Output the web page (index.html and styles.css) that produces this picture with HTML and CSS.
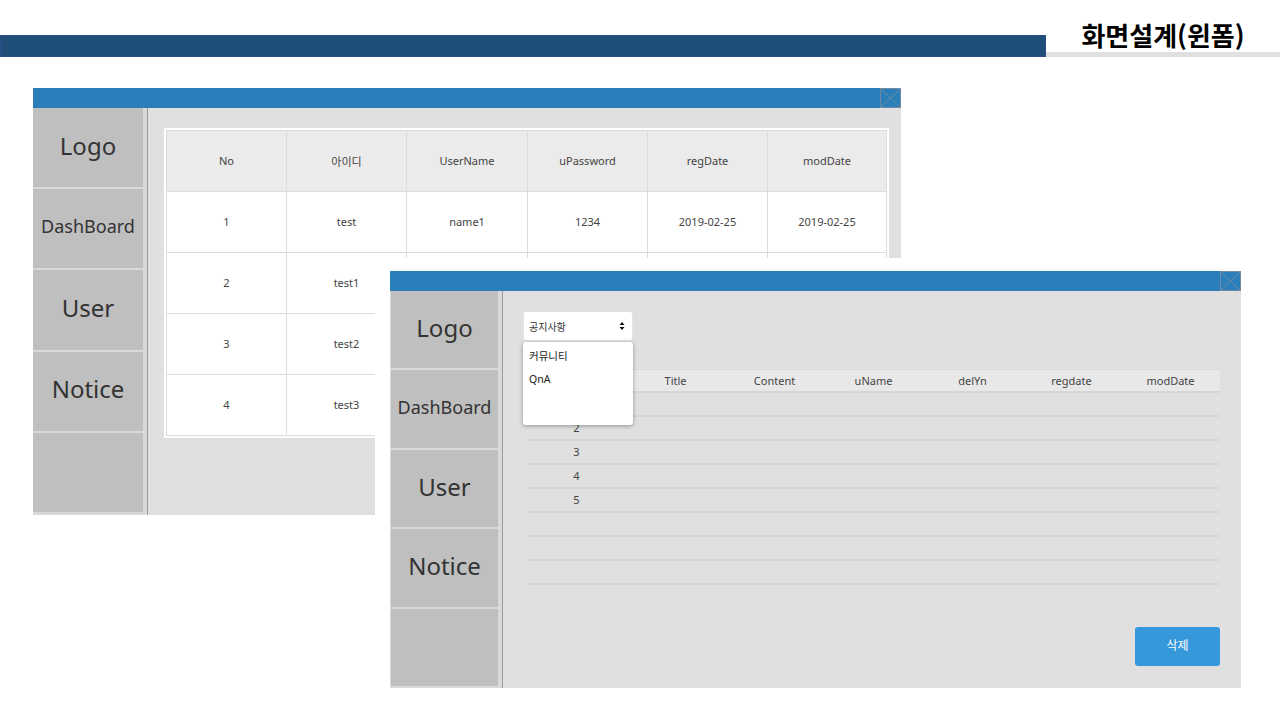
FILE: index.html
```html
<!DOCTYPE html>
<html lang="ko">
<head>
<meta charset="utf-8">
<title>화면설계(윈폼)</title>
<link rel="stylesheet" href="styles.css">
</head>
<body>
<header class="topbar">
  <div class="bluebar"></div>
  <div class="titlebox">화면설계(윈폼)</div>
</header>

<section class="win win1">
  <div class="titlebar">
    <svg class="close" width="21" height="20" viewBox="0 0 21 20"><rect x="0.5" y="0.5" width="20" height="19" fill="none" stroke="#6e8ba3"/><path d="M0.5 0.5 L20.5 19.5 M20.5 0.5 L0.5 19.5" stroke="#6e8ba3" fill="none"/></svg>
  </div>
  <div class="winbody">
    <nav class="side">
      <div class="item">Logo</div>
      <div class="item mid">DashBoard</div>
      <div class="item">User</div>
      <div class="item">Notice</div>
      <div class="item"></div>
    </nav>
    <div class="divider"></div>
    <main class="content1">
      <div class="t1">
        <div class="t1-inner">
          <div class="r1 head"><div>No</div><div>아이디</div><div>UserName</div><div>uPassword</div><div>regDate</div><div>modDate</div></div>
          <div class="r1"><div>1</div><div>test</div><div>name1</div><div>1234</div><div>2019-02-25</div><div>2019-02-25</div></div>
          <div class="r1"><div>2</div><div>test1</div><div></div><div></div><div></div><div></div></div>
          <div class="r1"><div>3</div><div>test2</div><div></div><div></div><div></div><div></div></div>
          <div class="r1"><div>4</div><div>test3</div><div></div><div></div><div></div><div></div></div>
        </div>
      </div>
    </main>
  </div>
</section>

<div class="mask">
  <section class="win win2">
    <div class="titlebar">
      <svg class="close" width="21" height="20" viewBox="0 0 21 20"><rect x="0.5" y="0.5" width="20" height="19" fill="none" stroke="#6e8ba3"/><path d="M0.5 0.5 L20.5 19.5 M20.5 0.5 L0.5 19.5" stroke="#6e8ba3" fill="none"/></svg>
    </div>
    <div class="winbody">
      <nav class="side">
        <div class="item">Logo</div>
        <div class="item mid">DashBoard</div>
        <div class="item">User</div>
        <div class="item">Notice</div>
        <div class="item"></div>
      </nav>
      <div class="divider"></div>
      <main class="content2">
        <div class="select-wrap">
          <div class="select">
            <span>공지사항</span>
            <svg class="arrows" width="6" height="10" viewBox="0 0 6 10"><path d="M0.5 4 L3 1 L5.5 4 Z M0.5 6 L3 9 L5.5 6 Z" fill="#111"/></svg>
          </div>
          <div class="dropdown">
            <div class="opt">커뮤니티</div>
            <div class="opt">QnA</div>
          </div>
        </div>
        <div class="t2">
          <div class="r2 head"><div>No</div><div>Title</div><div>Content</div><div>uName</div><div>delYn</div><div>regdate</div><div>modDate</div></div>
          <div class="r2"><div>1</div><div></div><div></div><div></div><div></div><div></div><div></div></div>
          <div class="r2"><div>2</div><div></div><div></div><div></div><div></div><div></div><div></div></div>
          <div class="r2"><div>3</div><div></div><div></div><div></div><div></div><div></div><div></div></div>
          <div class="r2"><div>4</div><div></div><div></div><div></div><div></div><div></div><div></div></div>
          <div class="r2"><div>5</div><div></div><div></div><div></div><div></div><div></div><div></div></div>
          <div class="r2"><div></div><div></div><div></div><div></div><div></div><div></div><div></div></div>
          <div class="r2"><div></div><div></div><div></div><div></div><div></div><div></div><div></div></div>
          <div class="r2"><div></div><div></div><div></div><div></div><div></div><div></div><div></div></div>
        </div>
        <button class="btn-del">삭제</button>
      </main>
    </div>
  </section>
</div>
</body>
</html>
```

FILE: styles.css
```css
* { box-sizing: border-box; }
html, body { margin: 0; padding: 0; }
body {
  width: 1280px;
  height: 720px;
  position: relative;
  overflow: hidden;
  background: #fff;
  font-family: "Noto Sans", "Noto Sans CJK KR", sans-serif;
  color: #333;
}

/* top header */
.topbar {
  display: flex;
  align-items: flex-end;
  height: 57px;
}
.bluebar {
  flex: 1;
  height: 22px;
  background: #1f4e79;
  border: 1px solid #2d4c8a;
}
.titlebox {
  width: 234px;
  height: 37px;
  border-bottom: 5px solid #e0e0e0;
  text-align: center;
  font-family: "Noto Sans CJK KR", "Noto Sans", sans-serif;
  font-weight: 700;
  font-size: 26px;
  line-height: 30px;
  color: #000;
}

/* windows */
.win {
  display: flex;
  flex-direction: column;
  background: #e0e0e0;
}
.win1 {
  position: absolute;
  left: 33px;
  top: 88px;
  width: 868px;
  height: 427px;
}
.mask {
  position: absolute;
  left: 375px;
  top: 258px;
  padding: 13px 0 0 15px;
  background: #fff;
}
.win2 {
  width: 851px;
  height: 417px;
}
.titlebar {
  flex: none;
  height: 20px;
  background: #2a7fba;
  display: flex;
  justify-content: flex-end;
}
.close { display: block; }
.winbody {
  flex: 1;
  display: flex;
  min-height: 0;
}
.side {
  width: 110px;
  display: flex;
  flex-direction: column;
  gap: 2px;
  padding-bottom: 3px;
  background: #d9d9d9;
}
.win2 .side {
  width: 108px;
  padding-left: 1px;
  padding-bottom: 2px;
}
.item {
  flex: 1;
  background: #bfbfbf;
  display: flex;
  align-items: center;
  justify-content: center;
  font-size: 24px;
  color: #333;
  padding-bottom: 5px;
}
.item.mid { font-size: 18px; }
.divider {
  width: 5px;
  background: #d9d9d9;
  border-right: 1px solid #9c9c9c;
}

/* window 1 table */
.content1 {
  flex: 1;
  padding: 20px 0 0 16px;
}
.t1 {
  width: 725px;
  background: #fff;
  padding: 2px;
}
.t1-inner {
  border-left: 1px solid #dcdcdc;
  border-top: 1px solid #dcdcdc;
}
.r1 {
  display: grid;
  grid-template-columns: 120px 120px 121px 120px 120px 119px;
  height: 61px;
  background: #fff;
}
.r1.head { background: #ebebeb; }
.r1 > div {
  border-right: 1px solid #dcdcdc;
  border-bottom: 1px solid #dcdcdc;
  display: flex;
  align-items: center;
  justify-content: center;
  font-size: 11px;
  color: #444;
  padding-bottom: 1px;
}

/* window 2 */
.content2 {
  flex: 1;
  display: flex;
  flex-direction: column;
  padding: 20px 21px 22px 20px;
}
.select-wrap {
  position: relative;
  z-index: 2;
  width: 110px;
  height: 30px;
}
.select {
  height: 30px;
  background: #fff;
  border: 1px solid #e4e4e4;
  border-radius: 3px;
  display: flex;
  align-items: center;
  justify-content: space-between;
  padding: 0 7px 0 5px;
  font-size: 10px;
  color: #333;
}
.arrows { display: block; }
.dropdown {
  position: absolute;
  left: 0;
  top: 31px;
  width: 110px;
  height: 83px;
  background: #fff;
  border-radius: 3px;
  box-shadow: 0 1px 4px rgba(0, 0, 0, 0.35);
  padding-top: 3px;
}
.opt {
  height: 23px;
  line-height: 23px;
  padding-left: 6px;
  font-size: 10.5px;
  color: #222;
}
.t2 {
  margin: 28px 0 0 4px;
  width: 693px;
}
.r2 {
  display: grid;
  grid-template-columns: repeat(7, 99px);
  height: 24px;
  border-bottom: 2px solid #d6d6d6;
}
.r2.head {
  background: #e8e8e8;
  border-top: 1px solid #d8d8d8;
}
.r2 > div {
  display: flex;
  align-items: center;
  justify-content: center;
  font-size: 11px;
  color: #444;
  padding-bottom: 1px;
}
.btn-del {
  margin-top: auto;
  align-self: flex-end;
  width: 85px;
  height: 39px;
  border: none;
  border-radius: 3px;
  background: #3598db;
  color: #fff;
  font-family: "Noto Sans CJK KR", sans-serif;
  font-size: 12px;
  padding: 0 0 5px;
}
```
